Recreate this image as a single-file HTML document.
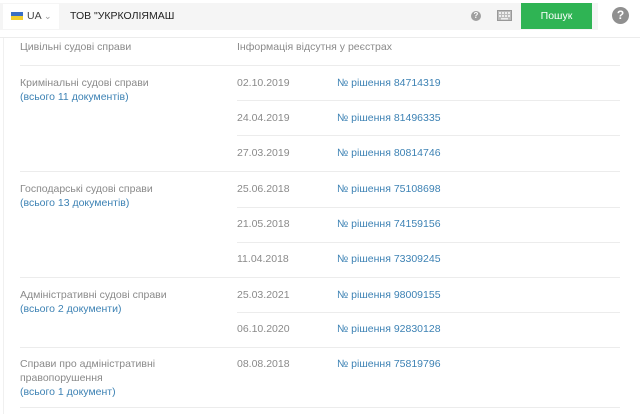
<!DOCTYPE html>
<html><head><meta charset="utf-8"><style>
*{margin:0;padding:0;box-sizing:border-box}
body{width:640px;height:414px;overflow:hidden;background:#fff;font-family:"Liberation Sans",sans-serif;font-size:10.5px;color:#8a8a8a;position:relative}
.a{position:absolute;white-space:nowrap}
.l{position:absolute;height:1px;background:#ececec;right:20px}
.k{color:#3d82b4}
.hd{position:absolute;left:0;top:3px;width:598px;height:27px;background:#f5f5f5}
</style></head><body>
<div class="hd"></div>
<div class="a" style="left:3px;top:4px;width:56px;height:25px;background:#fff"></div>
<div class="a" style="left:11px;top:12px;width:12px;height:4px;background:#3a6fc4"></div>
<div class="a" style="left:11px;top:16px;width:12px;height:4px;background:#f2cf2e"></div>
<div class="a" style="left:27px;top:10px;color:#444;font-size:10.5px">UA <span style="color:#999;font-size:9px">⌄</span></div>
<div class="a" style="left:70px;top:10px;color:#222;font-size:10.5px">ТОВ "УКРКОЛІЯМАШ</div>
<div class="a" style="left:471px;top:11px;width:10px;height:10px;border-radius:50%;background:#a0a0a0;color:#fff;font-size:8px;text-align:center;line-height:10px;font-weight:bold">?</div>
<svg class="a" style="left:497px;top:10px" width="15" height="11" viewBox="0 0 15 11"><rect x="0.5" y="0.5" width="14" height="10" fill="#bbb" stroke="#999"/><g fill="#eee"><rect x="2" y="2" width="2" height="2"/><rect x="5" y="2" width="2" height="2"/><rect x="8" y="2" width="2" height="2"/><rect x="11" y="2" width="2" height="2"/><rect x="2" y="5" width="2" height="2"/><rect x="5" y="5" width="2" height="2"/><rect x="8" y="5" width="2" height="2"/><rect x="11" y="5" width="2" height="2"/><rect x="4" y="8" width="7" height="1.5"/></g></svg>
<div class="a" style="left:521px;top:3px;width:71px;height:26px;background:#2fb454;color:#fff;text-align:center;line-height:26px;font-size:10.5px">Пошук</div>
<div class="a" style="left:612px;top:7px;width:17px;height:17px;border-radius:50%;background:#909090;color:#fff;font-size:12px;font-weight:bold;text-align:center;line-height:17px">?</div>
<div class="a" style="left:0;top:37px;width:640px;height:1px;background:#ececec"></div>
<div class="a" style="left:3px;top:38px;width:1px;height:376px;background:#f0f0f0"></div>

<div class="a" style="left:20px;top:41px">Цивільні судові справи</div>
<div class="a" style="left:237px;top:41px">Інформація відсутня у реєстрах</div>
<div class="l" style="left:20px;top:65px"></div>

<div class="a" style="left:20px;top:77px">Кримінальні судові справи</div>
<div class="a k" style="left:20px;top:91px">(всього 11 документів)</div>
<div class="a" style="left:237px;top:77px">02.10.2019</div><div class="a k" style="left:337px;top:77px">№ рішення 84714319</div>
<div class="l" style="left:237px;top:100px"></div>
<div class="a" style="left:237px;top:112px">24.04.2019</div><div class="a k" style="left:337px;top:112px">№ рішення 81496335</div>
<div class="l" style="left:237px;top:135px"></div>
<div class="a" style="left:237px;top:147px">27.03.2019</div><div class="a k" style="left:337px;top:147px">№ рішення 80814746</div>
<div class="l" style="left:20px;top:171px"></div>

<div class="a" style="left:20px;top:183px">Господарські судові справи</div>
<div class="a k" style="left:20px;top:197px">(всього 13 документів)</div>
<div class="a" style="left:237px;top:183px">25.06.2018</div><div class="a k" style="left:337px;top:183px">№ рішення 75108698</div>
<div class="l" style="left:237px;top:207px"></div>
<div class="a" style="left:237px;top:218px">21.05.2018</div><div class="a k" style="left:337px;top:218px">№ рішення 74159156</div>
<div class="l" style="left:237px;top:242px"></div>
<div class="a" style="left:237px;top:253px">11.04.2018</div><div class="a k" style="left:337px;top:253px">№ рішення 73309245</div>
<div class="l" style="left:20px;top:277px"></div>

<div class="a" style="left:20px;top:289px">Адміністративні судові справи</div>
<div class="a k" style="left:20px;top:303px">(всього 2 документи)</div>
<div class="a" style="left:237px;top:289px">25.03.2021</div><div class="a k" style="left:337px;top:289px">№ рішення 98009155</div>
<div class="l" style="left:237px;top:312px"></div>
<div class="a" style="left:237px;top:323px">06.10.2020</div><div class="a k" style="left:337px;top:323px">№ рішення 92830128</div>
<div class="l" style="left:20px;top:347px"></div>

<div class="a" style="left:20px;top:358px">Справи про адміністративні</div>
<div class="a" style="left:20px;top:372px">правопорушення</div>
<div class="a k" style="left:20px;top:386px">(всього 1 документ)</div>
<div class="a" style="left:237px;top:358px">08.08.2018</div><div class="a k" style="left:337px;top:358px">№ рішення 75819796</div>
<div class="l" style="left:20px;top:407px"></div>
</body></html>
